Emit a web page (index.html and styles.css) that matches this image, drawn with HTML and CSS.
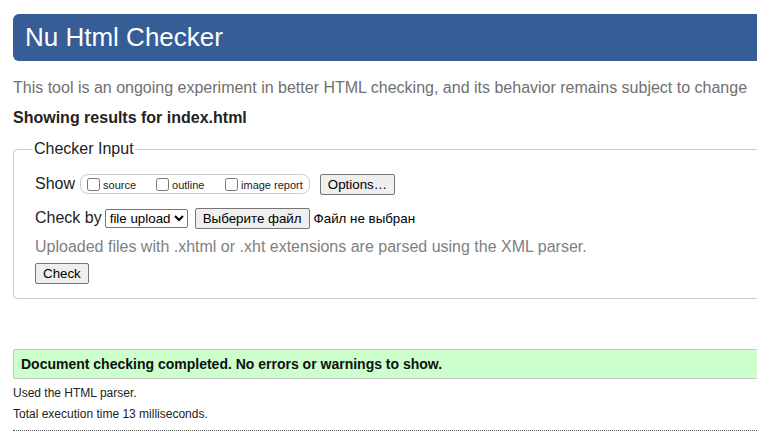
FILE: index.html
```html
<!DOCTYPE html>
<html lang="en">
<head>
<meta charset="utf-8">
<title>Nu Html Checker</title>
<link rel="stylesheet" href="styles.css">
</head>
<body>
<div class="page">
  <h1 class="title">Nu Html Checker</h1>
  <p class="intro">This tool is an ongoing experiment in better HTML checking, and its behavior remains subject to change</p>
  <p class="showing">Showing results for index.html</p>
  <fieldset class="input">
    <legend class="legend">Checker Input</legend>
    <div class="row show-row">
      <span class="label">Show</span>
      <span class="opts">
        <label class="opt opt-source"><input type="checkbox">source</label>
        <label class="opt opt-outline"><input type="checkbox">outline</label>
        <label class="opt"><input type="checkbox">image report</label>
      </span>
      <button class="btn">Options…</button>
    </div>
    <div class="row check-row">
      <span class="label">Check by</span>
      <select class="sel"><option>file upload</option></select>
      <button class="btn file-btn">Выберите файл</button>
      <span class="nofile">Файл не выбран</span>
    </div>
    <p class="note">Uploaded files with .xhtml or .xht extensions are parsed using the XML parser.</p>
    <button class="btn check-btn">Check</button>
  </fieldset>
  <p class="success">Document checking completed. No errors or warnings to show.</p>
  <p class="meta">Used the HTML parser.</p>
  <p class="meta">Total execution time 13 milliseconds.</p>
  <hr class="dots">
</div>
</body>
</html>
```
FILE: styles.css
```css
html { overflow: hidden; }
body {
  margin: 0;
  font-family: "Liberation Sans", Arial, sans-serif;
  color: #222;
  background: #fff;
}
.page {
  width: 800px;
  padding: 14px 0 0 13px;
}
.title {
  margin: 0;
  background: #365d95;
  color: #fff;
  font-weight: normal;
  font-size: 26px;
  line-height: 47px;
  height: 47px;
  padding: 0 12px;
  border-radius: 6px;
}
.intro {
  margin: 17px 0 0;
  font-size: 16px;
  line-height: 20px;
  color: #707070;
}
.showing {
  margin: 10px 0 0;
  font-size: 16px;
  line-height: 20px;
  font-weight: bold;
  color: #222;
}
.input {
  margin: 12px 0 0;
  border: 1px solid #ccc;
  border-radius: 4px;
  padding: 14px 21px 14px;
}
.legend {
  font-size: 16px;
  padding: 0 1px;
  margin-left: -2px;
  color: #222;
}
.row {
  display: flex;
  align-items: center;
}
.label {
  font-size: 16px;
  color: #222;
}
.show-row { height: 24px; }
.opts {
  display: flex;
  align-items: center;
  margin-left: 5px;
  border: 1px solid #ccc;
  border-radius: 8px;
  height: 18px;
  padding: 0 6px 0 6px;
}
.opt {
  display: flex;
  align-items: center;
  font-size: 11px;
  line-height: 13px;
  padding-top: 2px;
  color: #222;
}
.opt input {
  margin: -2px 3px 0 0;
  width: 13px;
  height: 13px;
}
.opt-source { width: 69px; }
.opt-outline { width: 69px; }
.btn {
  font-family: "Liberation Sans", Arial, sans-serif;
  font-size: 13.333px;
  color: #000;
  background: #efefef;
  border: 1px solid #767676;
  border-radius: 2px;
  padding: 1px 7px;
  height: 21px;
}
.show-row .btn { margin-left: 10px; }
.check-row { margin-top: 10px; height: 24px; }
.sel {
  font-family: "Liberation Sans", Arial, sans-serif;
  font-size: 13.333px;
  margin-left: 3px;
  height: 19px;
  border: 1px solid #767676;
  border-radius: 2px;
  background: #fff;
  color: #000;
}
.file-btn { margin-left: 7px; }
.nofile {
  font-size: 13.333px;
  margin-left: 4px;
  color: #000;
}
.note {
  margin: 7px 0 0;
  font-size: 16px;
  line-height: 20px;
  color: #808080;
}
.check-btn { margin-top: 6px; }
.success {
  margin: 50px 0 0;
  background: #ccffcc;
  border-top: 1px solid #c8c8c8;
  border-bottom: 1px solid #c8c8c8;
  border-left: 1px solid #c8c8c8;
  border-radius: 3px 0 0 3px;
  padding: 0 7px;
  font-size: 14px;
  line-height: 28px;
  font-weight: bold;
  color: #111;
}
.meta {
  margin: 7px 0 0;
  font-size: 12px;
  line-height: 14px;
  color: #222;
}
.dots {
  margin: 9px 0 0;
  border: 0;
  border-top: 1px dotted #555;
  height: 0;
}
```
